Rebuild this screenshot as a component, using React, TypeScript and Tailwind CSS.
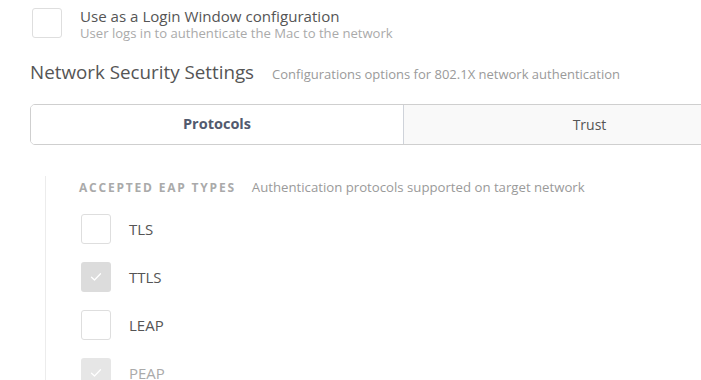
import React from "react";

const Check = () => (
  <svg width="12" height="10" viewBox="0 0 12 10" fill="none">
    <path d="M1.5 5.2 L4.5 8 L10.5 1.8" stroke="white" strokeWidth="1.3" strokeLinecap="round" strokeLinejoin="round" />
  </svg>
);

const Box = ({ checked }: { checked?: boolean }) =>
  checked ? (
    <div className="w-[30px] h-[30px] rounded-[3px] bg-[#dcdcdc] flex items-center justify-center shrink-0">
      <Check />
    </div>
  ) : (
    <div className="w-[30px] h-[30px] rounded-[3px] border border-[#dedede] bg-white shrink-0" />
  );

const items = [
  { label: "TLS", checked: false },
  { label: "TTLS", checked: true },
  { label: "LEAP", checked: false },
  { label: "PEAP", checked: true, faded: true },
];

export default function App() {
  return (
    <div
      className="w-[701px] h-[380px] overflow-hidden bg-white relative"
      style={{ fontFamily: "'Open Sans', 'Liberation Sans', sans-serif" }}
    >
      <div className="flex items-start pl-[32px] pt-[8px]">
        <Box />
        <div className="ml-[18px] -mt-[1px] flex flex-col">
          <div className="text-[15.1px] leading-[19px] text-[#555]">Use as a Login Window configuration</div>
          <div className="text-[13.1px] leading-[15px] text-[#aaa]">User logs in to authenticate the Mac to the network</div>
        </div>
      </div>
      <div className="flex items-baseline pl-[30px] mt-[19px]">
        <div className="text-[18.8px] leading-[24px] text-[#555]">Network Security Settings</div>
        <div className="ml-[18px] text-[13px] text-[#9a9a9a]">Configurations options for 802.1X network authentication</div>
      </div>
      <div className="ml-[30px] mt-[19px] w-[746px] h-[41px] flex border border-[#cfcfcf] rounded-[5px] overflow-hidden">
        <div className="w-[372px] bg-white flex items-center justify-center text-[14.5px] font-bold text-[#525a6e]">
          Protocols
        </div>
        <div className="flex-1 bg-[#f9f9f9] border-l border-[#cfd3da] flex items-center justify-center text-[14px] text-[#555]">
          Trust
        </div>
      </div>
      <div className="ml-[45px] mt-[31px] border-l border-[#ececec] pl-[33px] h-[210px]">
        <div className="flex items-baseline pt-[2px]">
          <div className="text-[12px] font-bold tracking-[1.8px] text-[#aaa]">ACCEPTED EAP TYPES</div>
          <div className="ml-[16px] text-[13.2px] text-[#9a9a9a]">Authentication protocols supported on target network</div>
        </div>
        <div className="flex flex-col gap-[18px] mt-[17px] pl-[2px]">
          {items.map((it) => (
            <div key={it.label} className="flex items-center">
              <div className={it.faded ? "opacity-70" : ""}>
                <Box checked={it.checked} />
              </div>
              <div className={`ml-[18px] text-[15px] ${it.faded ? "text-[#aaa]" : "text-[#555]"}`}>{it.label}</div>
            </div>
          ))}
        </div>
      </div>
    </div>
  );
}
